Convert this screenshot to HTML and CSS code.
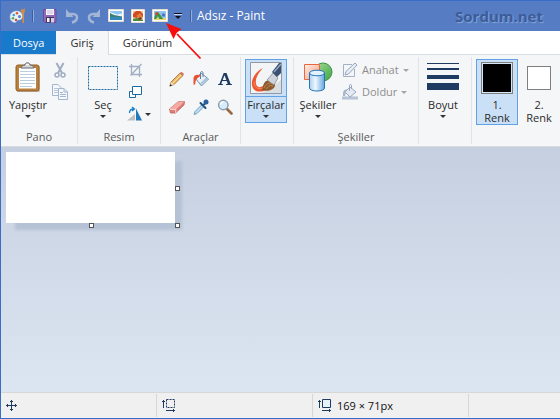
FILE: index.html
```html
<!DOCTYPE html>
<html lang="tr">
<head>
<meta charset="utf-8">
<meta name="viewport" content="width=device-width, initial-scale=1">
<title>Adsız - Paint</title>
<link rel="stylesheet" href="styles.css">
</head>
<body>
<div class="window">
  <header class="titlebar">
    <svg class="app-icon" width="18" height="18" viewBox="0 0 18 18" aria-hidden="true">
      <path d="M8 4C3.500 4 1 6.500 1 10c0 3 2 5.500 5 5.500 2 0 1.500-2.500 3.500-2.500s4-1 4-4c0-3-2.500-5-5.500-5z" fill="#e8f1fa" stroke="#9dbce0" stroke-width=".6"/>
      <circle cx="8" cy="6.300" r="1.300" fill="#e2592f"/><circle cx="4.800" cy="8" r="1.300" fill="#3f9be0"/><circle cx="4" cy="11.300" r="1.300" fill="#54ad45"/><circle cx="7" cy="13" r="1.200" fill="#d93f32"/><circle cx="10.500" cy="9.500" r="1.500" fill="#567dc3"/>
      <path d="M12 2c0 2 0 3 1.500 4.500V16h1.500V6.500C16 5 16 3.500 15.500 1l-1.200 1.500z" fill="#d98d3d"/>
    </svg>
    <span class="bar"></span>
    <button class="quick" aria-label="Kaydet">
      <svg width="16" height="16" viewBox="0 0 16 16"><path d="M1.500 1.500h12.500v13H3L1.500 13z" fill="#8f6bb5" stroke="#70489a"/><path d="M4 1h8v6H4z" fill="#f4f1fa"/><path d="M5 3h6M5 5h6" stroke="#c9bddd"/><path d="M4 9h8v5.500H4z" fill="#3f3658"/><path d="M5 10h2.500v4H5z" fill="#f4f1fa"/><path d="M9 10h3v4.500H9z" fill="#d8cfe8"/></svg>
    </button>
    <button class="quick" aria-label="Geri al">
      <svg width="16" height="16" viewBox="0 0 16 16"><path d="M2.500 6H9c5.500 0 5.500 7-1 8.500" fill="none" stroke="#a3b5d6" stroke-width="2.600"/><path d="M2 1v8h7.500L7 6.500 4.500 4z" fill="#a3b5d6"/></svg>
    </button>
    <button class="quick" aria-label="Yinele">
      <svg width="16" height="16" viewBox="0 0 16 16"><path d="M13.500 6H7c-5.500 0-5.500 7 1 8.500" fill="none" stroke="#a3b5d6" stroke-width="2.600"/><path d="M14 1v8H6.500L9 6.500 11.500 4z" fill="#a3b5d6"/></svg>
    </button>
    <button class="quick" aria-label="Masaüstü arka planı: doldur">
      <svg width="16" height="16" viewBox="0 0 16 16"><path d="M.5 1.500h15v12H.5z" fill="#fff" stroke="#e3ddd0"/><path d="M2 3h12v9H2z" fill="#8cc7ee"/><path d="M2 4l4 1.500 3 1 5-1v3H2z" fill="#e9f5fc"/><path d="M2 5l4 2 8 1.500v1H2z" fill="#3d7f73"/><path d="M2 9h12v3H2z" fill="#3487ba"/></svg>
    </button>
    <button class="quick" aria-label="Masaüstü arka planı: döşe">
      <svg width="16" height="16" viewBox="0 0 16 16"><path d="M1.500 1.500h13v13h-13z" fill="#fff" stroke="#e3ddd0"/><path d="M3 3h10v10H3z" fill="#efc08c"/><path d="M3 6l3-3h4l3 3v3l-4-1-2 2-4-1z" fill="#cf4a22"/><path d="M6 8l4-3 3 4-3 1z" fill="#e87d39"/><path d="M3 11l4-1 6 2v1H3z" fill="#4a8b38"/><path d="M8 10l3-1 1 2-3 1z" fill="#7a3a25"/></svg>
    </button>
    <button class="quick" aria-label="Masaüstü arka planı: ortala">
      <svg width="16" height="16" viewBox="0 0 16 16"><path d="M.5 1.500h15v12H.5z" fill="#fff" stroke="#e3ddd0"/><path d="M2 3h12v9H2z" fill="#8fc3ee"/><path d="M2 10h12v2H2z" fill="#e9cf73"/><path d="M4 5l2-1 3.500 4.500 1.500 2.500H7.500L6 8l-2 3H2z" fill="#3c9434"/><circle cx="4.500" cy="5.500" r="1.500" fill="#d8452c"/><circle cx="11.500" cy="7" r="1.700" fill="#5573cb"/></svg>
    </button>
    <button class="quick narrow" aria-label="Hızlı Erişim Araç Çubuğunu Özelleştir">
      <svg width="8" height="8" viewBox="0 0 8 8"><path d="M1 4h6L4 7z" fill="#111"/><path d="M0 1.500h8" stroke="#111"/><path d="M0 2.500h8" stroke="#c8d6ef"/></svg>
    </button>
    <span class="bar"></span>
    <h1 class="caption">Adsız - Paint</h1>
    <span class="watermark">Sordum.net</span>
    <svg class="pointer" width="36" height="38" viewBox="0 0 36 38" aria-hidden="true"><path d="M11 12l23.500 24.500" stroke="#f80d0d" stroke-width="1.800"/><path d="M0 1l15.500 6-5 4-3 6z" fill="#f80d0d"/></svg>
  </header>

  <nav class="tabs">
    <button class="tab file">Dosya</button>
    <button class="tab active">Giriş</button>
    <button class="tab view">Görünüm</button>
  </nav>

  <main class="ribbon">
    <section class="group clip">
      <div class="tools">
        <button class="big">
          <svg class="icon" width="32" height="32" viewBox="0 0 32 32"><path d="M5 4.500h23v25.500H5z" fill="#c8cbd0"/><rect x="4" y="3" width="23" height="26" rx="2" fill="#b9803e" stroke="#946124"/><path d="M7 6h17v20.500H7z" fill="#fff"/><path d="M8 9.500h15M8 12.500h15M8 15.500h15M8 18.500h15M8 21.500h15M8 24.500h12" stroke="#b9cdde"/><path d="M9 6c0-2 2-2.500 4-3 0-3 5-3 5 0 2 .5 4 1 4 3z" fill="#d5d7da" stroke="#64676c"/><path d="M14 2.500h3" stroke="#fff"/></svg>
          <span>Yapıştır</span><i class="caret"></i>
        </button>
        <div class="stack">
          <button class="small" aria-label="Kes"><svg width="16" height="16" viewBox="0 0 16 16"><path d="M4.500 1l5.500 10M11.500 1L6 11" stroke="#a1adc2" stroke-width="2"/><circle cx="5" cy="13" r="2" fill="none" stroke="#a1adc2" stroke-width="1.500"/><circle cx="11" cy="13" r="2" fill="none" stroke="#a1adc2" stroke-width="1.500"/></svg></button>
          <button class="small" aria-label="Kopyala"><svg width="16" height="16" viewBox="0 0 16 16"><path d="M.5.500H6L9.500 4v7.500h-9z" fill="#f5f8fc" stroke="#a3b4cf"/><path d="M2 4.500h4M2 6.500h4M2 8.500h4" stroke="#b8c5da"/><path d="M6.500 4.500H12L15.500 8v7.500h-9z" fill="#f5f8fc" stroke="#a3b4cf"/><path d="M12 4.500V8h3.500" fill="none" stroke="#a3b4cf"/><path d="M8 8.500h3M8 10.500h6M8 12.500h6" stroke="#a3b4cf"/></svg></button>
        </div>
      </div>
      <h2>Pano</h2>
    </section>

    <section class="group">
      <div class="tools">
        <button class="big">
          <svg class="icon" width="32" height="32" viewBox="0 0 32 32"><path d="M1.500 4.500h29v23h-29z" fill="none" stroke="#1a6aa6" stroke-dasharray="2 1"/></svg>
          <span>Seç</span><i class="caret"></i>
        </button>
        <div class="stack">
          <button class="small" aria-label="Kırp"><svg width="16" height="16" viewBox="0 0 16 16"><path d="M4.500 2v10.500H15M2 4.500h10.500V15M3.500 13.500L14.500 2" fill="none" stroke="#a1adc2" stroke-width="1.300"/></svg></button>
          <button class="small" aria-label="Yeniden boyutlandır"><svg width="16" height="16" viewBox="0 0 16 16"><path d="M2.500 7.500h6v6h-6z" fill="#fff" stroke="#1a6aa6"/><path d="M5.500 2.500h9v8h-9z" fill="#fff" stroke="#1a6aa6"/></svg></button>
          <button class="small" aria-label="Döndür"><svg width="16" height="16" viewBox="0 0 16 16"><path d="M0 14.500h8V8z" fill="#bdbfc1"/><path d="M9 2.500v12h6z" fill="#2179bd"/><path d="M2.500 7c0-3 1-4 4-4M5 1l2.500 2L5 5" fill="none" stroke="#1b82c9" stroke-width="1.300"/></svg><i class="caret"></i></button>
        </div>
      </div>
      <h2>Resim</h2>
    </section>

    <section class="group">
      <div class="palette">
        <button class="small" aria-label="Kalem"><svg width="16" height="16" viewBox="0 0 16 16"><path d="M1 15l1-4 9-9 3 2.500-9 9z" fill="#efb964" stroke="#9c6b3b" stroke-width=".8"/><path d="M11 2l1.500-1.200L15 3l-1 1.500z" fill="#d96b5f"/><path d="M1 15l1-4 3 2.500z" fill="#f5ddbd"/><path d="M.5 15.500l1-2.500 1.500 1.500z" fill="#222"/><path d="M4 12l8-8" stroke="#ffe0a0"/></svg></button>
        <button class="small" aria-label="Renkle doldur"><svg width="16" height="16" viewBox="0 0 16 16"><path d="M8 2l7.500 6-7 7L3 8z" fill="#e8f1f9" stroke="#6b8dac"/><path d="M8 14l7-6-2-1.500-6 6z" fill="#a9c6de"/><path d="M7.500 8V2c0-2 2.500-2 2.500 0v4" fill="none" stroke="#5b7f9f"/><path d="M8 4.500C4 3 1 4 .5 7v6.500c1.500 1 2-1 2-3L3.500 8z" fill="#ea5331"/></svg></button>
        <button class="small" aria-label="Metin"><svg width="16" height="16" viewBox="0 0 16 16"><path d="M6.700 2h2.800l4 10.700 1.500.500V14H9v-.800l1.700-.500-1-2.700H5.300l-1 2.700 1.700.500v.800H1v-.800l1.500-.500zM5.700 9h3.600L7.500 4.300z" fill="#203b61"/></svg></button>
        <button class="small" aria-label="Silgi"><svg width="16" height="16" viewBox="0 0 16 16"><path d="M.5 10l9-7.500h6L15 6l-8.500 8h-5z" fill="#df7b76" stroke="#bf615d" stroke-width=".8"/><path d="M.5 10l9-7.500h6L7 10.500z" fill="#f5aaa4"/><path d="M1 10.300l6 .4-.5 3" fill="none" stroke="#ffd7d2"/></svg></button>
        <button class="small" aria-label="Renk seçici"><svg width="16" height="16" viewBox="0 0 16 16"><path d="M1 15.500l1-3L9 5.500 11 7.500l-7 7z" fill="#bcdcf0" stroke="#5c8fb8" stroke-width=".8"/><path d="M7.500 4l5 5M10 6.500L13.500 3" stroke="#214e84" stroke-width="2" stroke-linecap="round"/><circle cx="13" cy="3" r="2.500" fill="#285f9c"/></svg></button>
        <button class="small" aria-label="Büyüteç"><svg width="16" height="16" viewBox="0 0 16 16"><path d="M10 10l4.500 4.500" stroke="#9b6740" stroke-width="2.600" stroke-linecap="round"/><circle cx="6.300" cy="6" r="4.700" fill="#d6ebfb" stroke="#8d9eb1" stroke-width="1.500"/><path d="M3.500 6c0-2 1-3 3-3" fill="none" stroke="#fff" stroke-width="1.300"/></svg></button>
      </div>
      <h2>Araçlar</h2>
    </section>

    <section class="group">
      <div class="tools">
        <button class="big selected split">
          <svg class="icon" width="32" height="32" viewBox="0 0 32 32"><path d="M.5.500h31v31H.5z" fill="#f2f4f6" stroke="#8f9aa6"/><path d="M18 28l13-10v13H12z" fill="#d9dee3"/><path d="M13 6C6 9 1 17 2 23c1 7 8 8 14 5l-2-5c-3 3-7 3-8-1-1-5 2-11 7-16z" fill="#ed5931"/><path d="M4 20c0 5 4 8 9 6" fill="none" stroke="#ff8a5f"/><path d="M11 28c3-2 1-6 5-9 4-2 9 0 9 4 0 5-8 7-14 5z" fill="#8d5a30"/><path d="M14 26c2-4 4-5 8-5M16 27c2-3 4-4 7-3" stroke="#c18a50" fill="none"/><path d="M17 18l6-7 5 5-4 7z" fill="#cfd4da" stroke="#7a828c" stroke-width=".7"/><path d="M22 10l7-9h2v10l-4 4z" fill="#3c5170"/><path d="M24 10l7-8" stroke="#93a9c6" stroke-width="1.300"/></svg>
          <span>Fırçalar</span><i class="caret"></i>
        </button>
      </div>
    </section>

    <section class="group shapes">
      <div class="tools">
        <button class="big">
          <svg class="icon" width="32" height="32" viewBox="0 0 32 32"><defs><linearGradient id="cyl"><stop offset="0" stop-color="#a9cff2"/><stop offset=".4" stop-color="#eef7ff"/><stop offset="1" stop-color="#63a5e0"/></linearGradient><linearGradient id="ball" x2="1" y2="1"><stop offset="0" stop-color="#a7da9b"/><stop offset="1" stop-color="#3da53d"/></linearGradient><linearGradient id="box" x2="1" y2="1"><stop offset="0" stop-color="#fff0e8"/><stop offset="1" stop-color="#f89a78"/></linearGradient></defs><circle cx="21" cy="10" r="9" fill="url(#ball)" stroke="#399546"/><path d="M2.500 2.500h15v15h-15z" fill="url(#box)" stroke="#e66741"/><path d="M7.500 11v15c0 4 15 4 15 0V11z" fill="url(#cyl)" stroke="#2474ba"/><ellipse cx="15" cy="11" rx="7.500" ry="2.800" fill="#e2f1ff" stroke="#2474ba"/></svg>
          <span>Şekiller</span><i class="caret"></i>
        </button>
        <div class="stack">
          <button class="small" disabled><svg width="16" height="16" viewBox="0 0 16 16"><path d="M10 2.500H1.500v12h11V7" fill="none" stroke="#a3b0c5"/><path d="M3 13l1-3.500L13 1l2 2-8.500 9z" fill="#e7edf5" stroke="#96a6be"/></svg><span>Anahat</span><i class="caret"></i></button>
          <button class="small" disabled><svg width="16" height="16" viewBox="0 0 16 16"><path d="M0 12.500h16v3H0z" fill="#b7c3d6"/><path d="M8 3l6 5-6 5-5-5z" fill="#e4eaf3" stroke="#99a8c0"/><path d="M7.500 7V1.500c0-1.500 2-1.500 2 0V5" fill="none" stroke="#99a8c0"/><path d="M5 5C1 6 1 8 1 12h2l1-4z" fill="#a7b5ca"/></svg><span>Doldur</span><i class="caret"></i></button>
        </div>
      </div>
      <h2>Şekiller</h2>
    </section>

    <section class="group size">
      <div class="tools">
        <button class="big">
          <svg class="icon" width="32" height="32" viewBox="0 0 32 32"><path d="M0 1h32v1H0zM0 6h32v2H0zM0 13h32v4H0zM0 21h32v7H0z" fill="#203b61"/></svg>
          <span>Boyut</span><i class="caret"></i>
        </button>
      </div>
    </section>

    <section class="group colors">
      <div class="tools">
        <button class="big selected"><i class="swatch"></i><span>1.<br>Renk</span></button>
        <button class="big"><i class="swatch second"></i><span>2.<br>Renk</span></button>
      </div>
    </section>
  </main>

  <div class="workspace">
    <div class="sheet"><i class="handle east"></i><i class="handle south"></i><i class="handle corner"></i></div>
  </div>

  <footer class="status">
    <div class="cell"><svg width="12" height="12" viewBox="0 0 12 12"><path d="M0 5.500h11M5.500 0v11M1.500 4v3M9.500 4v3M4 1.500h3M4 9.500h3" stroke="#203b61" fill="none"/></svg></div>
    <div class="cell"><svg width="14" height="13" viewBox="0 0 14 13"><path d="M1.500 1v8M0 2.500h3M4 11.500h9M11.500 10v3" stroke="#203b61"/><path d="M4.500.500h8v8h-8z" fill="none" stroke="#203b61" stroke-dasharray="2 1"/></svg></div>
    <div class="cell"><svg width="14" height="13" viewBox="0 0 14 13"><path d="M1.500 1v8M0 2.500h3M4 11.500h9M11.500 10v3" stroke="#203b61"/><path d="M4.500.500h8v8h-8z" fill="#e6f2fb" stroke="#203b61"/></svg><span>169 × 71px</span></div>
    <div class="cell"></div>
  </footer>
</div>
</body>
</html>
```
FILE: styles.css
```css
* {
  box-sizing: border-box;
}

body {
  margin: 0;
  font: 11px/16px "Open Sans", "Noto Sans", sans-serif;
  color: #2b2b2b;
}

button {
  margin: 0;
  padding: 0;
  border: 0;
  background: none;
  font: inherit;
  color: inherit;
}

svg {
  display: block;
  flex: none;
}

h1,
h2 {
  margin: 0;
  font: inherit;
}

.window {
  display: flex;
  flex-direction: column;
  min-height: 100vh;
  overflow: hidden;
  border: 1px solid #3a6dc5;
  border-right: 0;
}

/* Title bar */
.titlebar {
  position: relative;
  display: flex;
  align-items: center;
  height: 30px;
  padding: 0 17px 0 8px;
  background: #567dc3;
}

.bar {
  flex: none;
  width: 2px;
  height: 12px;
  margin: 0 5px;
  border-left: 1px solid #3d5f9c;
  border-right: 1px solid #93aede;
}

.quick {
  display: flex;
  flex: none;
  justify-content: center;
  width: 22px;
}

.quick.narrow {
  width: 14px;
}

.caption {
  flex: none;
  font-size: 12px;
  color: #fff;
}

.watermark {
  margin-left: auto;
  font-size: 15px;
  font-weight: 700;
  color: #3d5c98;
  text-shadow: 1px 1px 1px #86a4da;
}

.pointer {
  position: absolute;
  z-index: 1;
  top: 21px;
  left: 165px;
}

/* Tabs */
.tabs {
  display: flex;
  height: 24px;
  background: #fff;
  border-bottom: 1px solid #d9dce0;
}

.tab {
  padding: 0 14px;
  border-right: 1px solid #dadbdc;
}

.tab.file {
  padding: 0 12px;
  background: #1979ca;
  border: 0;
  color: #fff;
}

.tab.active {
  margin-bottom: -1px;
  background: #f5f6f7;
}

.tab.view {
  border: 0;
}

/* Ribbon */
.ribbon {
  display: grid;
  grid-template-columns: 77px 83px 80px 53px 125px 53px 1fr;
  padding: 2px 0;
  background: #f5f6f7;
  border-bottom: 1px solid #dadbdc;
}

.group {
  display: flex;
  flex-direction: column;
  justify-content: space-between;
  min-height: 87px;
  padding-top: 2px;
  border-right: 1px solid #e2e3e4;
}

.group.colors {
  border: 0;
}

.group h2 {
  line-height: 14px;
  text-align: center;
  color: #5a5a5a;
}

.tools {
  display: flex;
  gap: 3px;
  padding-left: 4px;
}

.clip .tools {
  padding-left: 6px;
}

.shapes .tools,
.size .tools {
  padding-left: 3px;
}

.colors .tools {
  gap: 0;
}

.big {
  display: flex;
  flex: none;
  flex-direction: column;
  align-items: center;
  width: 42px;
  min-height: 64px;
  padding: 2px 0 0;
  border: 1px solid transparent;
  line-height: 13px;
}

.big span {
  margin-top: 4px;
  white-space: nowrap;
}

.big .caret {
  margin-top: 4px;
}

.selected {
  background: #c9e0f7;
  border-color: #62a2e4;
}

.split {
  background: linear-gradient(#c9e0f7 36px, #62a2e4 36px, #62a2e4 37px, #c9e0f7 37px);
}

.caret {
  flex: none;
  width: 0;
  border: 3px solid transparent;
  border-top-color: #333;
  border-bottom: 0;
}

.stack {
  display: flex;
  flex-direction: column;
}

.small {
  display: flex;
  align-items: center;
  gap: 2px;
  height: 22px;
}

.small span {
  margin: 0 2px;
}

.small:disabled {
  color: #8d8d8d;
}

.small:disabled .caret {
  border-top-color: #a5a5a5;
}

.palette {
  display: grid;
  grid-template-columns: repeat(3, 24px);
  grid-auto-rows: 28px;
  padding: 6px 0 0 4px;
}

.palette .small {
  height: 28px;
  justify-content: center;
}

.swatch {
  width: 32px;
  height: 32px;
  border: 1px solid #7f7f7f;
  background: #000;
  box-shadow: inset 0 0 0 1px #d5e6f7;
}

.swatch.second {
  width: 24px;
  height: 24px;
  margin: 4px 0;
  background: #fff;
  box-shadow: none;
}

/* Drawing area */
.workspace {
  flex: 1;
  padding: 5px;
  background: linear-gradient(#c6cfe0, #dce6f2);
}

.sheet {
  position: relative;
  width: 169px;
  height: 71px;
  background: #fff;
  box-shadow: 8px 8px 3px -1px #b5c2d5;
}

.handle {
  position: absolute;
  width: 5px;
  height: 5px;
  border: 1px solid #555;
  background: #fff;
}

.east {
  top: 34px;
  left: 100%;
}

.south {
  top: 100%;
  left: 83px;
}

.corner {
  top: 100%;
  left: 100%;
}

/* Status bar */
.status {
  display: grid;
  grid-template-columns: 156px 156px 156px 1fr;
  height: 26px;
  padding: 1px 0;
  background: #f0f0f0;
  border-top: 1px solid #d7d7d7;
  color: #111;
}

.cell {
  display: flex;
  align-items: center;
  gap: 5px;
  padding-left: 5px;
  border-right: 1px solid #d7d7d7;
}

.cell:last-child {
  border: 0;
}
```
